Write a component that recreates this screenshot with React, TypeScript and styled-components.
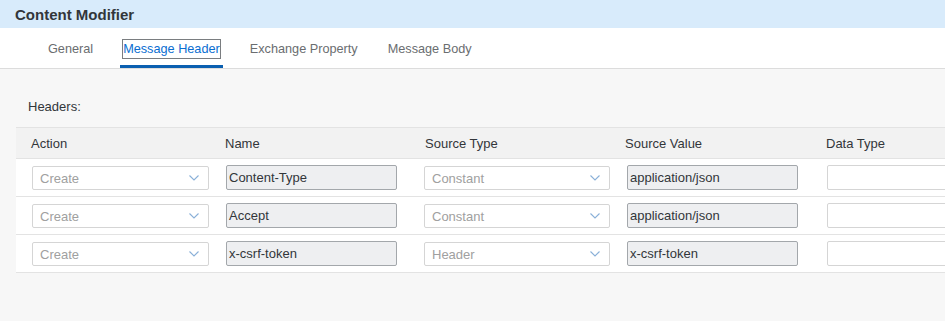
import React from "react";
import styled, { createGlobalStyle } from "styled-components";

const Global = createGlobalStyle`
  html, body { margin: 0; padding: 0; }
  body {
    background: #f7f7f7;
    font-family: "Liberation Sans", Arial, sans-serif;
    font-size: 13px;
    color: #32363a;
    overflow: hidden;
  }
`;

const Page = styled.div`
  width: 945px;
  height: 321px;
  overflow: hidden;
  background: #f7f7f7;
`;

const TitleBar = styled.div`
  height: 28px;
  background: #d8ebfb;
  padding-left: 15px;
  display: flex;
  align-items: center;
  font-weight: bold;
  font-size: 15px;
  color: #32363a;
`;

const TabBar = styled.div`
  height: 40px;
  background: #ffffff;
  border-bottom: 1px solid #dcdcdc;
  display: flex;
  align-items: stretch;
  padding-left: 45px;
  gap: 24px;
`;

const Tab = styled.div<{ $active?: boolean }>`
  display: flex;
  align-items: center;
  padding: 4px 3px 0;
  border-bottom: 3px solid ${(p) => (p.$active ? "#0a5fb0" : "transparent")};
  color: ${(p) => (p.$active ? "#0a6ed1" : "#6a6d70")};
  font-size: 12.7px;
`;

const TabLabel = styled.span<{ $focus?: boolean }>`
  padding: 1px 0;
  outline: ${(p) => (p.$focus ? "1px solid #7a7d80" : "none")};
  outline-offset: 0;
  line-height: 16px;
`;

const Content = styled.div`
  padding-top: 30px;
`;

const SectionLabel = styled.div`
  padding-left: 28px;
  height: 16px;
  line-height: 16px;
  color: #32363a;
  margin-bottom: 12px;
`;

const Table = styled.div`
  margin-left: 16px;
  width: 1000px;
  border-top: 1px solid #e3e3e3;
`;

const COLS = "200px 200px 200px 200px 200px";

const HeaderRow = styled.div`
  display: grid;
  grid-template-columns: ${COLS};
  height: 30px;
  background: #f2f2f2;
  border-bottom: 1px solid #e3e3e3;
  align-items: center;
`;

const HeaderCell = styled.div<{ $pl: number }>`
  padding-left: ${(p) => p.$pl}px;
  color: #32363a;
`;

const Row = styled.div`
  display: grid;
  grid-template-columns: ${COLS};
  height: 37px;
  background: #ffffff;
  border-bottom: 1px solid #e3e3e3;
  align-items: center;
`;

const Cell = styled.div<{ $pl: number }>`
  padding-left: ${(p) => p.$pl}px;
  display: flex;
  align-items: center;
`;

const SelectBox = styled.div<{ $w: number }>`
  box-sizing: border-box;
  width: ${(p) => p.$w}px;
  height: 24px;
  margin-top: 1px;
  border: 1px solid #d5d5d5;
  border-radius: 2px;
  background: #ffffff;
  display: flex;
  align-items: center;
  justify-content: space-between;
  padding: 0 9px 0 7px;
  color: #a0a0a0;
`;

const TextInput = styled.div<{ $w: number; $readOnly?: boolean }>`
  box-sizing: border-box;
  width: ${(p) => p.$w}px;
  height: 25px;
  border: 1px solid ${(p) => (p.$readOnly ? "#a3a7ab" : "#d5d5d5")};
  border-radius: 2px;
  background: ${(p) => (p.$readOnly ? "#eeeff1" : "#ffffff")};
  display: flex;
  align-items: center;
  padding-left: 2px;
  color: #32363a;
`;

const Chevron = () => (
  <svg width="10" height="6" viewBox="0 0 10 6" fill="none">
    <polyline points="0.5,0.5 5,5 9.5,0.5" stroke="#8ab0d8" strokeWidth="1.1" />
  </svg>
);

const rows = [
  { name: "Content-Type", type: "Constant", value: "application/json" },
  { name: "Accept", type: "Constant", value: "application/json" },
  { name: "x-csrf-token", type: "Header", value: "x-csrf-token" },
];

export default function App() {
  return (
    <Page>
      <Global />
      <TitleBar>Content Modifier</TitleBar>
      <TabBar>
        <Tab><TabLabel>General</TabLabel></Tab>
        <Tab $active><TabLabel $focus>Message Header</TabLabel></Tab>
        <Tab><TabLabel>Exchange Property</TabLabel></Tab>
        <Tab><TabLabel>Message Body</TabLabel></Tab>
      </TabBar>
      <Content>
        <SectionLabel>Headers:</SectionLabel>
        <Table>
          <HeaderRow>
            <HeaderCell $pl={15}>Action</HeaderCell>
            <HeaderCell $pl={9}>Name</HeaderCell>
            <HeaderCell $pl={9}>Source Type</HeaderCell>
            <HeaderCell $pl={9}>Source Value</HeaderCell>
            <HeaderCell $pl={10}>Data Type</HeaderCell>
          </HeaderRow>
          {rows.map((r) => (
            <Row key={r.name}>
              <Cell $pl={16}>
                <SelectBox $w={177}>
                  <span>Create</span>
                  <Chevron />
                </SelectBox>
              </Cell>
              <Cell $pl={10}>
                <TextInput $w={171} $readOnly>{r.name}</TextInput>
              </Cell>
              <Cell $pl={8}>
                <SelectBox $w={186}>
                  <span>{r.type}</span>
                  <Chevron />
                </SelectBox>
              </Cell>
              <Cell $pl={11}>
                <TextInput $w={171} $readOnly>{r.value}</TextInput>
              </Cell>
              <Cell $pl={11}>
                <TextInput $w={180} />
              </Cell>
            </Row>
          ))}
        </Table>
      </Content>
    </Page>
  );
}
